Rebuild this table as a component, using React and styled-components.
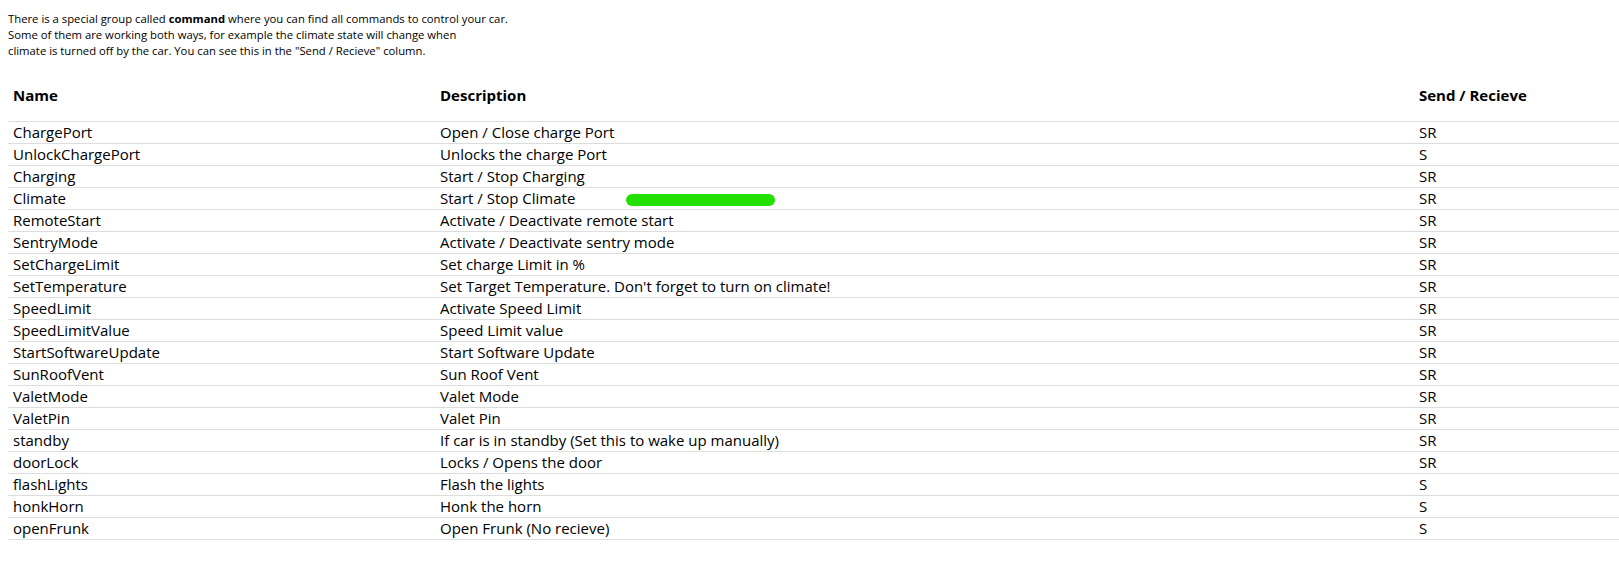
import React from 'react'
import styled, { createGlobalStyle } from 'styled-components'

const GlobalStyle = createGlobalStyle`
    body {
        margin: 0;
        background: #fff;
        color: #000;
        font-family: 'Open Sans', 'Noto Sans', sans-serif;
    }
`

const Page = styled.div`
    padding: 11px 0 0 8px;
`

const Intro = styled.p`
    margin: 0;
    font-size: 11.3px;
    line-height: 16px;
`

const Table = styled.table`
    width: 100%;
    margin-top: 14px;
    border-collapse: collapse;
    table-layout: fixed;
`

const HeadCell = styled.th`
    width: ${props => props.width};
    height: 44px;
    padding: 0 5px 4px;
    text-align: left;
    font-size: 15px;
    font-weight: 700;
    border-bottom: 1px solid #dddddd;
`

const Cell = styled.td`
    position: relative;
    height: 21px;
    padding: 0 5px;
    font-size: 15px;
    line-height: 21px;
    white-space: nowrap;
    border-bottom: 1px solid #dddddd;
`

// green highlight stroke drawn over the climate row
const Marker = styled.span`
    position: absolute;
    left: 191px;
    top: 6px;
    width: 149px;
    height: 12px;
    border-radius: 6px;
    background: #22e000;
`

const commands = [
    ['ChargePort', 'Open / Close charge Port', 'SR'],
    ['UnlockChargePort', 'Unlocks the charge Port', 'S'],
    ['Charging', 'Start / Stop Charging', 'SR'],
    ['Climate', 'Start / Stop Climate', 'SR', true],
    ['RemoteStart', 'Activate / Deactivate remote start', 'SR'],
    ['SentryMode', 'Activate / Deactivate sentry mode', 'SR'],
    ['SetChargeLimit', 'Set charge Limit in %', 'SR'],
    ['SetTemperature', "Set Target Temperature. Don't forget to turn on climate!", 'SR'],
    ['SpeedLimit', 'Activate Speed Limit', 'SR'],
    ['SpeedLimitValue', 'Speed Limit value', 'SR'],
    ['StartSoftwareUpdate', 'Start Software Update', 'SR'],
    ['SunRoofVent', 'Sun Roof Vent', 'SR'],
    ['ValetMode', 'Valet Mode', 'SR'],
    ['ValetPin', 'Valet Pin', 'SR'],
    ['standby', 'If car is in standby (Set this to wake up manually)', 'SR'],
    ['doorLock', 'Locks / Opens the door', 'SR'],
    ['flashLights', 'Flash the lights', 'S'],
    ['honkHorn', 'Honk the horn', 'S'],
    ['openFrunk', 'Open Frunk (No recieve)', 'S'],
]

export default function App() {
    return (
        <Page>
            <GlobalStyle />
            <Intro>
                There is a special group called <b>command</b> where you can find all commands to control your car.<br />
                Some of them are working both ways, for example the climate state will change when<br />
                climate is turned off by the car. You can see this in the "Send / Recieve" column.
            </Intro>
            <Table>
                <thead>
                    <tr>
                        <HeadCell width="417px">Name</HeadCell>
                        <HeadCell width="969px">Description</HeadCell>
                        <HeadCell>Send / Recieve</HeadCell>
                    </tr>
                </thead>
                <tbody>
                    {commands.map(([name, desc, dir, marked]) => (
                        <tr key={name}>
                            <Cell>{name}</Cell>
                            <Cell>{desc}{marked && <Marker />}</Cell>
                            <Cell>{dir}</Cell>
                        </tr>
                    ))}
                </tbody>
            </Table>
        </Page>
    )
}
